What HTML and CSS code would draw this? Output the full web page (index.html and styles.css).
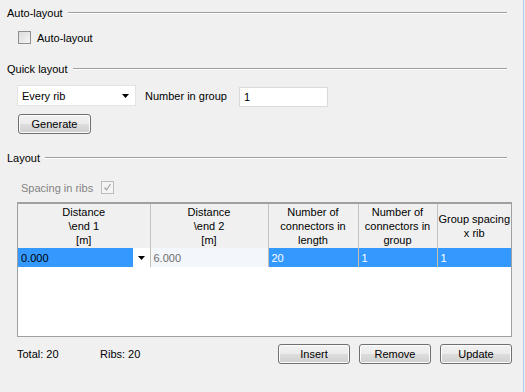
FILE: index.html
```html
<!DOCTYPE html>
<html lang="en">
<head>
  <meta charset="UTF-8">
  <title>Connector layout</title>
  <link rel="stylesheet" href="styles.css">
</head>
<body>
  <div class="window">

    <section class="group">
      <div class="group-title"><span>Auto-layout</span><div class="rule"></div></div>
      <div class="group-body auto-body">
        <label class="check"><span class="box"></span>Auto-layout</label>
      </div>
    </section>

    <section class="group quick">
      <div class="group-title"><span>Quick layout</span><div class="rule"></div></div>
      <div class="group-body">
        <div class="quick-row">
          <div class="combo">
            <span>Every rib</span>
            <svg width="7" height="4" viewBox="0 0 7 4"><path d="M0 0h7L3.5 4z" fill="#000"/></svg>
          </div>
          <span class="field-label">Number in group</span>
          <div class="textbox">1</div>
        </div>
        <button class="btn generate">Generate</button>
      </div>
    </section>

    <section class="group layout">
      <div class="group-title"><span>Layout</span><div class="rule"></div></div>
      <div class="group-body">
        <label class="check disabled">Spacing in ribs<span class="box checked">
          <svg width="11" height="11" viewBox="0 0 11 11"><path d="M2.5 5.5l2 2.5 4-6" fill="none" stroke="#a8a8a8" stroke-width="1.3"/></svg>
        </span></label>

        <div class="grid">
          <table>
            <colgroup>
              <col style="width: 132px">
              <col style="width: 118px">
              <col style="width: 90px">
              <col style="width: 79px">
              <col style="width: 74px">
            </colgroup>
            <thead>
              <tr>
                <th>Distance<br>\end 1<br>[m]</th>
                <th>Distance<br>\end 2<br>[m]</th>
                <th>Number of<br>connectors in<br>length</th>
                <th>Number of<br>connectors in<br>group</th>
                <th>Group spacing<br>x rib</th>
              </tr>
            </thead>
            <tbody>
              <tr class="selected">
                <td class="edit">
                  <span>0.000</span>
                  <span class="drop"><svg width="7" height="4" viewBox="0 0 7 4"><path d="M0 0h7L3.5 4z" fill="#000"/></svg></span>
                </td>
                <td class="readonly">6.000</td>
                <td>20</td>
                <td>1</td>
                <td>1</td>
              </tr>
            </tbody>
          </table>
        </div>

        <div class="footer">
          <span class="stat">Total: 20</span>
          <span class="stat">Ribs: 20</span>
          <div class="actions">
            <button class="btn">Insert</button>
            <button class="btn">Remove</button>
            <button class="btn">Update</button>
          </div>
        </div>
      </div>
    </section>

  </div>
</body>
</html>
```

FILE: styles.css
```css
html, body {
  margin: 0;
  background: #f0f0f0;
}
body {
  font-family: "Liberation Sans", Arial, sans-serif;
  font-size: 11px;
  color: #000;
}
.window {
  width: 524px;
  height: 392px;
  border-right: 1px solid #aacdee;
  padding-top: 6px;
  box-sizing: border-box;
}
.group-title {
  display: flex;
  align-items: center;
  height: 14px;
  padding-left: 7px;
  padding-right: 16px;
}
.group-title span {
  margin-right: 5px;
}
.rule {
  flex: 1;
  border-top: 1px solid #a0a0a0;
  border-bottom: 1px solid #fff;
}
.group-body {
  padding-left: 17px;
  padding-right: 13px;
}
.auto-body {
  padding-top: 11px;
}
.check {
  display: flex;
  align-items: center;
  height: 13px;
  gap: 6px;
  padding-left: 1px;
}
.box {
  width: 11px;
  height: 11px;
  border: 1px solid #8e8f8f;
  background: linear-gradient(135deg, #dcdcdc, #f4f4f4);
  display: flex;
  align-items: center;
  justify-content: center;
}
.box svg {
  display: block;
}
.check.disabled {
  color: #838383;
  padding-left: 4px;
  gap: 8px;
}
.box.checked {
  border-color: #bcbcbc;
  background: #f4f4f4;
}
.quick {
  margin-top: 18px;
}
.quick .group-body {
  padding-top: 9px;
}
.quick-row {
  display: flex;
  align-items: center;
  height: 21px;
}
.combo {
  width: 119px;
  height: 21px;
  box-sizing: border-box;
  background: #fff;
  border: 1px solid #e3e3e3;
  display: flex;
  align-items: center;
  justify-content: space-between;
  padding: 0 6px 0 4px;
}
.field-label {
  margin-left: 9px;
}
.textbox {
  width: 89px;
  height: 20px;
  box-sizing: border-box;
  margin-left: 12px;
  background: #fff;
  border: 1px solid #dadada;
  padding-left: 4px;
  line-height: 18px;
  margin-top: 3px;
}
.btn {
  font-family: inherit;
  font-size: 11px;
  color: #000;
  height: 20px;
  padding: 0;
  border: 1px solid #707070;
  border-radius: 3px;
  background: linear-gradient(#f2f2f2 0%, #ebebeb 50%, #dddddd 51%, #cfcfcf 100%);
  box-shadow: inset 0 0 0 1px #fcfcfc;
}
.generate {
  width: 73px;
  margin-top: 8px;
  margin-left: 1px;
}
.layout {
  margin-top: 17px;
}
.layout .group-body {
  padding-top: 16px;
}
.grid {
  margin-top: 8px;
  width: 495px;
  height: 135px;
  box-sizing: border-box;
  background: #fff;
  border: 1px solid #a0a0a0;
  border-top: 2px solid #a0a0a0;
  overflow: hidden;
}
table {
  border-collapse: collapse;
  table-layout: fixed;
  width: 493px;
}
th {
  height: 44px;
  padding: 0;
  font-weight: normal;
  line-height: 14px;
  background: #f0f0f0;
  border-right: 1px solid #c4c4c4;
  text-align: center;
  vertical-align: middle;
  white-space: nowrap;
  overflow: hidden;
}
th:last-child {
  border-right: none;
}
td {
  height: 19px;
  padding: 0 0 0 3px;
  border-right: 1px solid #c8bfae;
  white-space: nowrap;
}
td:last-child {
  border-right: none;
}
.selected td {
  background: #3399ff;
  color: #fff;
}
.selected td.edit {
  color: #000;
  padding: 0 0 0 3px;
  position: relative;
}
.drop {
  position: absolute;
  top: 0;
  right: 0;
  width: 17px;
  height: 19px;
  background: #fff;
  display: flex;
  align-items: center;
  justify-content: center;
}
.selected td.readonly {
  background: #f3f6fa;
  color: #6d6d6d;
}
.footer {
  display: flex;
  align-items: center;
  margin-top: 7px;
  width: 495px;
}
.stat {
  width: 83px;
}
.actions {
  margin-left: auto;
  display: flex;
  gap: 9px;
}
.actions .btn {
  width: 72px;
}
```
